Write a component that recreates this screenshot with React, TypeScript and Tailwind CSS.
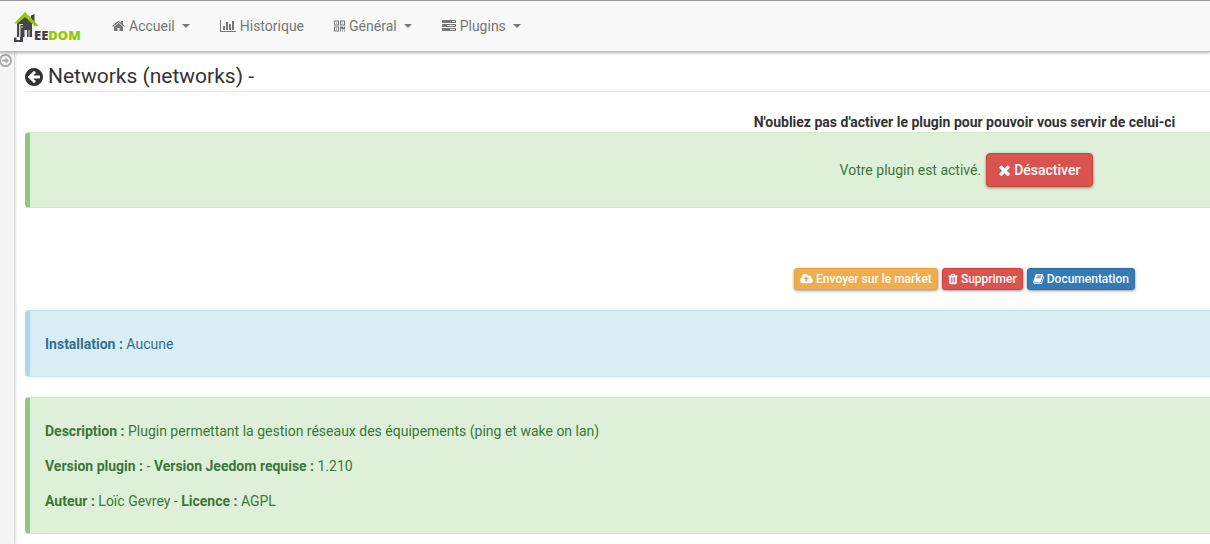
import type { ReactNode } from "react";

const paths = {
  home: "M1472 992v480q0 26-19 45t-45 19h-384v-384h-256v384h-384q-26 0-45-19t-19-45v-480q0-1 .5-3t.5-3l575-474 575 474q1 2 1 6zm223-69l-62 74q-8 9-21 11h-3q-13 0-21-7l-692-577-692 577q-12 8-24 7-13-2-21-11l-62-74q-8-10-7-23.5t11-21.5l719-599q32-26 76-26t76 26l244 204v-195q0-14 9-23t23-9h192q14 0 23 9t9 23v408l219 182q10 8 11 21.5t-7 23.5z",
  chart: "M640 896v512h-256v-512h256zm384-512v1024h-256v-1024h256zm1024 1152v128h-2048v-1536h128v1408h1920zm-640-896v768h-256v-768h256zm384-384v1152h-256v-1152h256z",
  tasks: "M1024 1408h640v-128h-640v128zm-384-512h1024v-128h-1024v128zm640-512h384v-128h-384v128zm512 832v256q0 26-19 45t-45 19h-1664q-26 0-45-19t-19-45v-256q0-26 19-45t45-19h1664q26 0 45 19t19 45zm0-512v256q0 26-19 45t-45 19h-1664q-26 0-45-19t-19-45v-256q0-26 19-45t45-19h1664q26 0 45 19t19 45zm0-512v256q0 26-19 45t-45 19h-1664q-26 0-45-19t-19-45v-256q0-26 19-45t45-19h1664q26 0 45 19t19 45z",
  qrcode: "M384 1152v128h-128v-128h128zm0-768v128h-128v-128h128zm768 0v128h-128v-128h128zM128 1407h384v-383h-384v383zM128 640h384v-384h-384v384zM896 640h384v-384h-384v384zM640 896v640h-640v-640h640zM1152 1408v128h-128v-128h128zM1408 1408v128h-128v-128h128zM1408 896v384h-384v-128h-128v384h-128v-640h384v128h128v-128h128zM640 128v640h-640v-640h640zM1408 128v640h-640v-640h640z",
  back: "M1408 960v-128q0-26-19-45t-45-19h-502l189-189q19-19 19-45t-19-45l-91-91q-18-18-45-18t-45 18l-362 362-91 91q-18 18-18 45t18 45l91 91 362 362q18 18 45 18t45-18l91-91q18-18 18-45t-18-45l-189-189h502q26 0 45-19t19-45zm256-64q0 209-103 385.5t-279.5 279.5-385.5 103-385.5-103-279.5-279.5-103-385.5 103-385.5 279.5-279.5 385.5-103 385.5 103 279.5 279.5 103 385.5z",
  open: "M1280 896q0 14-9 23l-320 320q-9 9-23 9-13 0-22.5-9.5t-9.5-22.5v-192h-352q-13 0-22.5-9.5t-9.5-22.5v-192q0-13 9.5-22.5t22.5-9.5h352v-192q0-14 9-23t23-9q12 0 24 10l319 319q9 9 9 23zm160 0q0-148-73-273t-198-198-273-73-273 73-198 198-73 273 73 273 198 198 273 73 273-73 198-198 73-273zm224 0q0 209-103 385.5t-279.5 279.5-385.5 103-385.5-103-279.5-279.5-103-385.5 103-385.5 279.5-279.5 385.5-103 385.5 103 279.5 279.5 103 385.5z",
  times: "M1490 1322q0 40-28 68l-136 136q-28 28-68 28t-68-28l-294-294-294 294q-28 28-68 28t-68-28l-136-136q-28-28-28-68t28-68l294-294-294-294q-28-28-28-68t28-68l136-136q28-28 68-28t68 28l294 294 294-294q28-28 68-28t68 28l136 136q28 28 28 68t-28 68l-294 294 294 294q28 28 28 68z",
  upload: "M1280 864q0-14-9-23l-352-352q-9-9-23-9t-23 9l-351 351q-10 12-10 24 0 14 9 23t23 9h224v352q0 13 9.5 22.5t22.5 9.5h192q13 0 22.5-9.5t9.5-22.5v-352h224q13 0 22.5-9.5t9.5-22.5zm640 288q0 159-112.5 271.5t-271.5 112.5h-1088q-185 0-316.5-131.5t-131.5-316.5q0-130 70-240t188-165q-2-30-2-43 0-212 150-362t362-150q156 0 285.5 87t188.5 231q71-62 166-62 106 0 181 75t75 181q0 76-41 138 130 31 213.5 135.5t83.5 238.5z",
  trash: "M704 1376v-704q0-14-9-23t-23-9h-64q-14 0-23 9t-9 23v704q0 14 9 23t23 9h64q14 0 23-9t9-23zm256 0v-704q0-14-9-23t-23-9h-64q-14 0-23 9t-9 23v704q0 14 9 23t23 9h64q14 0 23-9t9-23zm256 0v-704q0-14-9-23t-23-9h-64q-14 0-23 9t-9 23v704q0 14 9 23t23 9h64q14 0 23-9t9-23zm-544-992h448l-48-117q-7-9-17-11h-317q-10 2-17 11zm928 32v64q0 14-9 23t-23 9h-96v948q0 83-47 143.5t-113 60.5h-832q-66 0-113-58.5t-47-141.5v-952h-96q-14 0-23-9t-9-23v-64q0-14 9-23t23-9h309l70-167q15-37 54-63t79-26h320q40 0 79 26t54 63l70 167h309q14 0 23 9t9 23z",
  book: "M1703 478q40 57 18 129l-275 906q-19 64-76.5 107.5t-122.5 43.5h-923q-77 0-148.5-53.5t-99.5-131.5q-24-67-2-127 0-4 3-27t4-37q1-8-3-21.5t-3-19.5q2-11 8-21t16.5-23.5 16.5-23.5q23-38 45-91.5t30-91.5q3-10 .5-30t-.5-28q3-11 17-28t17-23q21-36 42-92t25-90q1-9-2.5-32t.5-28q4-13 22-30.5t22-22.5q19-26 42.5-84.5t27.5-96.5q1-8-3-25.5t-2-26.5q2-8 9-18t18-23 17-21q8-12 16.5-30.5t15-35 16-36 19.5-32 26.5-23.5 36-11.5 47.5 5.5l-1 3q38-9 51-9h761q74 0 114 56t18 130l-274 906q-36 119-71.5 153.5t-128.5 34.5h-869q-27 0-38 15-11 16-1 43 24 70 144 70h923q29 0 56-15.5t35-41.5l300-987q7-22 5-57 38 15 59 43zm-1064 2q-4 13 2 22.5t20 9.5h608q13 0 25.5-9.5t16.5-22.5l21-64q4-13-2-22.5t-20-9.5h-608q-13 0-25.5 9.5t-16.5 22.5zm-83 256q-4 13 2 22.5t20 9.5h608q13 0 25.5-9.5t16.5-22.5l21-64q4-13-2-22.5t-20-9.5h-608q-13 0-25.5 9.5t-16.5 22.5z",
};

type IconProps = { name: keyof typeof paths; viewBox?: string; className: string };

function Icon({ name, viewBox = "64 0 1664 1792", className }: IconProps) {
  return (
    <svg aria-hidden="true" viewBox={viewBox} fill="currentColor" fillRule="evenodd" className={`shrink-0 ${className}`}>
      <path d={paths[name]} />
    </svg>
  );
}

function Logo() {
  return (
    <a href="#" aria-label="Jeedom" className="flex w-[70px] shrink-0 items-end pb-[9px]">
      <svg aria-hidden="true" viewBox="0 0 25 31" className="h-[31px] w-[25px] shrink-0">
        <path fill="#444548" d="M17 4.500 20.500 3v9L17 9z" />
        <path fill="#444548" d="M3 12 11 5l7 7v14h-5v-7h-2.500v7H9v5H0v-4.500h2.500V29H6v-3H3z" />
        <path fill="#d8d8d9" d="M5 13h4v1H6.500v12H5zM7 15.500h2v1H7zM15.500 19v7h-1v-7z" />
        <path fill="#93ca02" d="M11 1 25 15h-4.500L11 6l-7.500 6.500H0z" />
      </svg>
      <span className="-ml-[5px] font-['Open_Sans',sans-serif] text-[13px] leading-[14px] font-extrabold">
        <span className="text-[#444548]">EE</span>
        <span className="text-[#93ca02]">DOM</span>
      </span>
    </a>
  );
}

function NavItem({ icon, label, caret = true }: { icon: ReactNode; label: string; caret?: boolean }) {
  return (
    <a href="#" className="flex h-full items-center gap-1 px-[15px]">
      {icon}
      <span>{label}</span>
      {caret && <span className="ml-[3px] border-x-4 border-t-4 border-x-transparent border-t-current" />}
    </a>
  );
}

function Alert({ tone, children }: { tone: "success" | "info"; children: ReactNode }) {
  const tones = {
    success: "border-[#d0e9c6] border-l-[#93c67f] bg-[#dff0d8] text-[#3c763d]",
    info: "border-[#bce8f1] border-l-[#afd6f0] bg-[#d9edf7] text-[#31708f]",
  };
  return <div className={`rounded-[4px] border border-l-[5px] px-[15px] ${tones[tone]}`}>{children}</div>;
}

const small = "flex h-[22px] items-center gap-[3px] rounded-[3px] border px-[5px] text-xs font-medium text-white shadow-[0_1px_3px_rgba(0,0,0,0.4)]";

export default function App() {
  return (
    <div className="flex min-h-screen flex-col overflow-x-hidden bg-white font-[Roboto,sans-serif] text-sm leading-5 text-[#333]">
      <header className="relative z-10 flex h-[52px] border-t border-b border-t-[#999] border-b-[#bbb] bg-[#f8f8f8] pl-[14px] shadow-[0_1px_3px_rgba(0,0,0,0.3)]">
        <Logo />
        <nav className="ml-[13px] flex text-[#777]">
          <NavItem label="Accueil" icon={<Icon name="home" className="h-[14px] w-[13px]" />} />
          <NavItem label="Historique" caret={false} icon={<Icon name="chart" viewBox="0 0 2048 1792" className="h-[14px] w-4" />} />
          <NavItem label="Général" icon={<Icon name="qrcode" viewBox="0 -60 1408 1792" className="h-[14px] w-[11px]" />} />
          <NavItem label="Plugins" icon={<Icon name="tasks" viewBox="0 0 1792 1792" className="h-[14px] w-[14px]" />} />
        </nav>
      </header>

      <div className="flex flex-1">
        <aside className="w-[15px] shrink-0 border-r border-[#ddd] bg-[#f5f5f5] shadow-[1px_0_3px_rgba(0,0,0,0.12)]">
          <button type="button" aria-label="Ouvrir le menu" className="mt-[2px] -ml-px block text-[#aaa]">
            <Icon name="open" viewBox="128 128 1536 1536" className="size-[13px]" />
          </button>
        </aside>

        <main className="min-w-[1904px] flex-1 pr-[15px] pb-[10px] pl-[10px]">
          <h1 className="mb-5 flex h-10 items-center gap-[5px] border-b border-[#e5e5e5] pt-[10px] text-[21px] leading-[29px]">
            <button type="button" aria-label="Retour">
              <Icon name="back" viewBox="128 128 1536 1536" className="size-[18px]" />
            </button>
            Networks (networks) -
          </h1>

          <p className="text-center font-bold">N'oubliez pas d'activer le plugin pour pouvoir vous servir de celui-ci</p>
          <Alert tone="success">
            <div className="flex items-center justify-center gap-[5px] py-5">
              <span>Votre plugin est activé.</span>
              <button
                type="button"
                className="flex h-[34px] items-center gap-1 rounded-[4px] border border-[#d43f3a] bg-[#d9534f] px-3 font-medium text-white shadow-[0_1px_3px_rgba(0,0,0,0.4)]"
              >
                <Icon name="times" viewBox="302 192 1188 1362" className="h-3 w-[11px]" />
                Désactiver
              </button>
            </div>
          </Alert>

          <div className="mt-[60px] mb-5 flex justify-center gap-1">
            <button type="button" className={`${small} border-[#eea236] bg-[#f0ad4e]`}>
              <Icon name="upload" viewBox="0 0 1920 1792" className="h-3 w-[13px]" />
              Envoyer sur le market
            </button>
            <button type="button" className={`${small} border-[#d43f3a] bg-[#d9534f]`}>
              <Icon name="trash" viewBox="192 0 1408 1792" className="h-3 w-[10px]" />
              Supprimer
            </button>
            <a href="#" className={`${small} border-[#2e6da4] bg-[#337ab7]`}>
              <Icon name="book" className="h-3 w-[11px]" />
              Documentation
            </a>
          </div>

          <Alert tone="info">
            <p className="pt-[23px] pb-[22px]">
              <strong>Installation :</strong> Aucune
            </p>
          </Alert>

          <div className="mt-5">
            <Alert tone="success">
              <div className="flex flex-col gap-[15px] pt-[23px] pb-[22px]">
                <p>
                  <strong>Description :</strong> Plugin permettant la gestion réseaux des équipements (ping et wake on lan)
                </p>
                <p>
                  <strong>Version plugin :</strong> - <strong>Version Jeedom requise :</strong> 1.210
                </p>
                <p>
                  <strong>Auteur :</strong> Loïc Gevrey - <strong>Licence :</strong> AGPL
                </p>
              </div>
            </Alert>
          </div>
        </main>
      </div>
    </div>
  );
}
